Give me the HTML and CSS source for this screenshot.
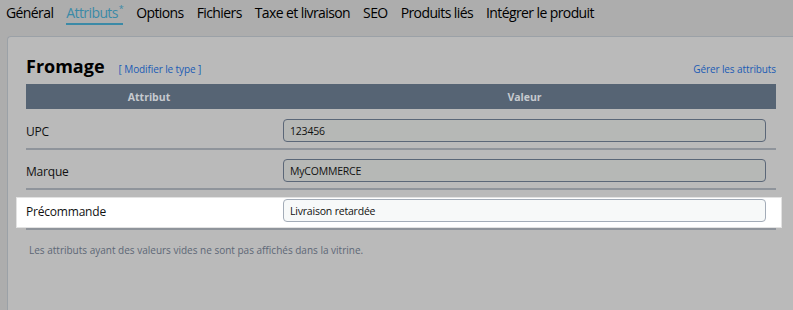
FILE: index.html
```html
<!DOCTYPE html>
<html lang="fr">
<head>
    <meta charset="UTF-8">
    <meta name="viewport" content="width=device-width, initial-scale=1.0">
    <title>Attributs du produit</title>
    <link rel="stylesheet" href="styles.css">
</head>
<body>
    <nav class="tabs">
        <a class="tab">Général</a>
        <a class="tab active">Attributs<sup>*</sup></a>
        <a class="tab">Options</a>
        <a class="tab">Fichiers</a>
        <a class="tab">Taxe et livraison</a>
        <a class="tab">SEO</a>
        <a class="tab">Produits liés</a>
        <a class="tab">Intégrer le produit</a>
    </nav>

    <div class="panel">
        <div class="panel-head">
            <h2>Fromage</h2>
            <a class="link small">[ Modifier le type ]</a>
            <a class="link manage">Gérer les attributs</a>
        </div>

        <div class="attr-table">
            <div class="row head">
                <div class="col-name">Attribut</div>
                <div class="col-value">Valeur</div>
            </div>
            <div class="row">
                <div class="col-name">UPC</div>
                <div class="col-value"><input type="text" value="123456"></div>
            </div>
            <div class="row">
                <div class="col-name">Marque</div>
                <div class="col-value"><input type="text" value="MyCOMMERCE"></div>
            </div>
            <div class="row focus">
                <div class="col-name">Précommande</div>
                <div class="col-value"><input type="text" value="Livraison retardée"></div>
            </div>
        </div>

        <p class="note">Les attributs ayant des valeurs vides ne sont pas affichés dans la vitrine.</p>
    </div>
</body>
</html>
```

FILE: styles.css
```css
body {
    margin: 0;
    background-color: #adadad;
    font-family: "Open Sans", "Noto Sans", sans-serif;
    color: #111;
    height: 310px;
    overflow: hidden;
}

.tabs {
    display: flex;
    gap: 13px;
    padding: 2px 0 0 6px;
    height: 34px;
}

.tab {
    font-size: 14px;
    letter-spacing: -0.6px;
    line-height: 22px;
    height: 23px;
    color: #000;
    font-weight: 500;
}

.tab.active {
    color: #3b8aa7;
    border-bottom: 2px solid #3b8aa7;
    height: 21px;
}

.tab sup {
    font-size: 9px;
    vertical-align: 6px;
    line-height: 0;
    margin-left: 1px;
}

.panel {
    margin-left: 7px;
    background-color: #bababa;
    border: 1px solid #9ba1a7;
    border-right: none;
    border-bottom: none;
    border-top-left-radius: 4px;
    padding: 17px 17px 60px 18px;
}

.panel-head {
    display: flex;
    align-items: baseline;
    height: 30px;
}

.panel-head h2 {
    margin: 0 14px 0 0;
    font-size: 18px;
    font-weight: 700;
    color: #000;
}

.link {
    color: #1a5bb5;
    font-size: 10px;
    letter-spacing: -0.1px;
}

.link.manage {
    margin-left: auto;
}

.row {
    display: flex;
    align-items: center;
    height: 38px;
    border-bottom: 2px solid #8f949b;
    font-size: 12px;
    letter-spacing: -0.2px;
    position: relative;
}

.row.head {
    height: 25px;
    border-bottom: none;
    background-color: #566474;
    color: #c6cacf;
    font-weight: 700;
    font-size: 10.5px;
    letter-spacing: 0;
    margin-bottom: 1px;
}

.row.head .col-name,
.row.head .col-value {
    text-align: center;
}

.col-name {
    width: 246px;
}

.row .col-name {
    padding-top: 4px;
}

.row.head .col-name {
    padding-top: 0;
}

.col-value {
    flex: 1;
    padding: 0 10px 0 11px;
}

input {
    width: 100%;
    box-sizing: border-box;
    height: 23px;
    margin-top: 3px;
    padding: 0 6px;
    border: 1px solid #5b6778;
    border-radius: 4px;
    background-color: #b6b8b6;
    font-family: inherit;
    font-size: 10.5px;
    letter-spacing: -0.2px;
    color: #111;
}

.row.focus::before {
    content: "";
    position: absolute;
    top: 7px;
    bottom: 0;
    left: -10px;
    right: -6px;
    background-color: #fff;
    border: 1px solid #e2e2e2;
    z-index: 0;
}

.row.focus > div {
    position: relative;
    z-index: 1;
}

.row.focus input {
    background-color: #f7f9f9;
    border-color: #a3acb8;
}

.note {
    margin: 13px 0 0 3px;
    font-size: 10px;
    color: #5d6776;
}
```
